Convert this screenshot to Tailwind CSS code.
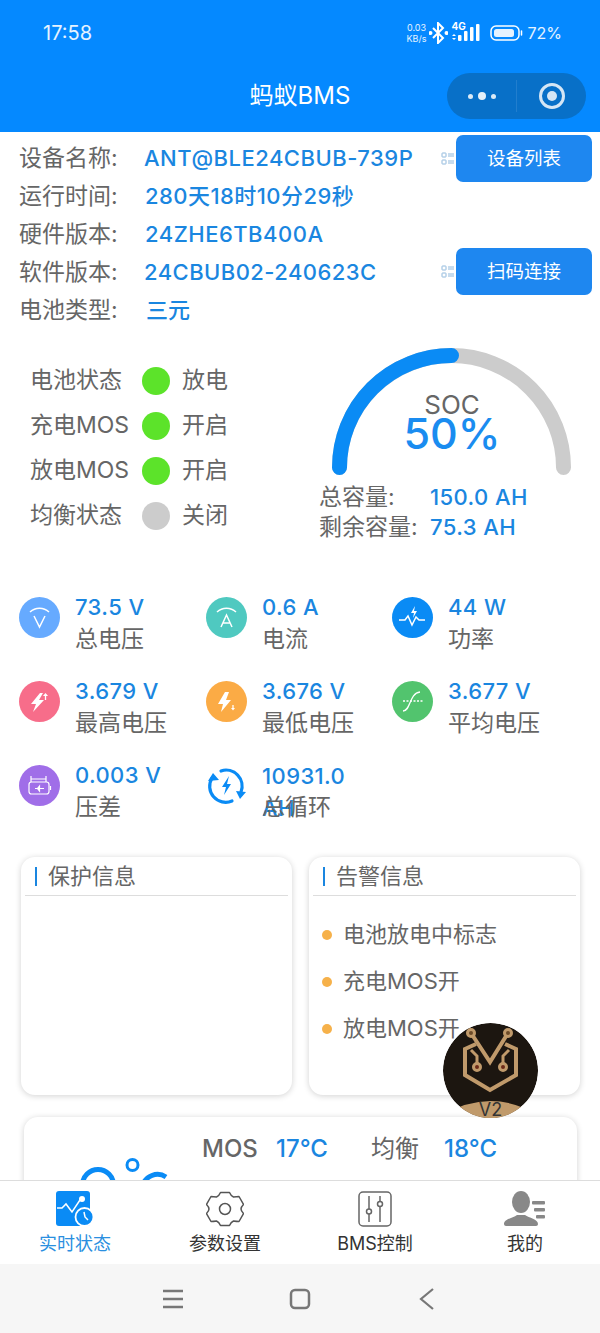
<!DOCTYPE html>
<html lang="zh">
<head>
  <meta charset="UTF-8">
  <meta name="viewport" content="width=device-width, initial-scale=1.0">
  <title>蚂蚁BMS</title>
  <script src="https://cdn.jsdelivr.net/npm/@tailwindcss/browser@4"></script>
</head>
<body class="font-['Inter','Noto_Sans_CJK_SC',sans-serif] bg-white">
<div class="relative w-[600px] h-[1333px] overflow-hidden flex flex-col">

  <!-- Header -->
  <header class="h-[132px] shrink-0 bg-[#0589ff] text-white">
    <div class="h-[66px] flex items-center pl-[43px] pr-[38px] justify-between">
      <span class="text-[20px] text-white/90">17:58</span>
      <div class="flex items-center">
        <div class="text-[9px] leading-[11px] text-center text-white/90 w-[24px]">0.03<br>KB/s</div>
        <svg class="ml-[1px]" width="19" height="22" viewBox="0 0 19 22" fill="none" stroke="white" stroke-width="2"><path d="M4 6l10 10-5 5V1l5 5L4 16"/><circle cx="1.500" cy="11" r="1" fill="white"/><circle cx="17.500" cy="11" r="1" fill="white"/></svg>
        <div class="ml-[3px] relative w-[32px] h-[22px]">
          <span class="absolute left-0 -top-[3px] text-[10px] font-bold">4G</span>
          <svg class="absolute left-0 top-0" width="32" height="22" viewBox="0 0 32 22" fill="white"><path d="M1 14l2-2 2 2zM1 16h4l-2 2z"/><rect x="7" y="13" width="3.500" height="6" rx="1"/><rect x="13" y="9" width="3.500" height="10" rx="1"/><rect x="19" y="5" width="3.500" height="14" rx="1"/><rect x="25" y="2" width="3.500" height="17" rx="1"/></svg>
        </div>
        <svg class="ml-[7px]" width="34" height="18" viewBox="0 0 34 18" fill="none"><rect x="1" y="2" width="28" height="14" rx="5" stroke="white" stroke-width="1.500"/><rect x="4" y="5" width="20" height="8" rx="2.500" fill="white" fill-opacity=".9"/><path d="M31.500 7v4" stroke="white" stroke-width="1.500" stroke-linecap="round"/></svg>
        <span class="ml-[3px] text-[16px] text-white/90">72%</span>
      </div>
    </div>
    <div class="relative h-[66px] flex items-center justify-center pb-[6px]">
      <span class="text-[24px]">蚂蚁BMS</span>
      <div class="absolute left-[447px] top-[7px] w-[139px] h-[46px] rounded-full bg-[#0870c8] flex items-center">
        <div class="w-[69px] flex items-center justify-center gap-[5px]">
          <i class="w-[5px] h-[5px] rounded-full bg-white/85"></i><i class="w-[8px] h-[8px] rounded-full bg-white/90"></i><i class="w-[5px] h-[5px] rounded-full bg-white/85"></i>
        </div>
        <div class="w-px h-[32px] bg-white/10"></div>
        <div class="flex-1 flex items-center justify-center">
          <div class="w-[26px] h-[26px] rounded-full border-[3px] border-[#d5e6f5] flex items-center justify-center"><i class="w-[10px] h-[10px] rounded-full bg-[#d5e6f5]"></i></div>
        </div>
      </div>
    </div>
  </header>

  <main class="relative flex-1 overflow-hidden">
    <!-- Device info -->
    <section class="flex justify-between pl-[19px] pr-[8px]">
      <div class="pt-[7px] text-[22px] text-[#666]">
        <div class="h-[38px] flex items-center"><span class="w-[125px] text-[23px]">设备名称:</span><span class="text-[#1a86e0] font-medium tracking-[0.5px]">ANT@BLE24CBUB-739P</span></div>
        <div class="h-[38px] flex items-center"><span class="w-[126px] text-[23px]">运行时间:</span><span class="text-[#1a86e0] font-medium tracking-[0.45px]">280天18时10分29秒</span></div>
        <div class="h-[38px] flex items-center"><span class="w-[126px] text-[23px]">硬件版本:</span><span class="text-[#1a86e0] font-medium tracking-[0.5px]">24ZHE6TB400A</span></div>
        <div class="h-[38px] flex items-center"><span class="w-[125px] text-[23px]">软件版本:</span><span class="text-[#1a86e0] font-medium tracking-[0.45px]">24CBUB02-240623C</span></div>
        <div class="h-[38px] flex items-center"><span class="w-[127px] text-[23px]">电池类型:</span><span class="text-[#1a86e0] font-medium">三元</span></div>
      </div>
      <div class="pt-[3px] flex flex-col gap-[66px]">
        <div class="flex items-center gap-[2px]">
          <svg width="13" height="13" viewBox="0 0 13 13" fill="none" stroke="#8fb8dc"><rect x="1" y="1" width="4" height="4" rx=".5"/><rect x="1" y="8" width="4" height="4" rx=".5"/><path d="M7 2h6M7 4h6M7 9h6M7 11h6"/></svg>
          <button class="w-[136px] h-[47px] rounded-[7px] bg-[#1e87f0] text-white text-[18.500px]">设备列表</button>
        </div>
        <div class="flex items-center gap-[2px]">
          <svg width="13" height="13" viewBox="0 0 13 13" fill="none" stroke="#8fb8dc"><rect x="1" y="1" width="4" height="4" rx=".5"/><rect x="1" y="8" width="4" height="4" rx=".5"/><path d="M7 2h6M7 4h6M7 9h6M7 11h6"/></svg>
          <button class="w-[136px] h-[47px] rounded-[7px] bg-[#1e87f0] text-white text-[18.500px]">扫码连接</button>
        </div>
      </div>
    </section>

    <!-- Status + SOC -->
    <section class="flex mt-[18px]">
      <div class="pl-[30px] w-[319px] pt-[11px] text-[23px] text-[#666]">
        <div class="h-[45px] flex items-center"><span class="w-[112px]">电池状态</span><i class="w-[28px] h-[28px] rounded-full bg-[#5ce32a]"></i><span class="ml-[12px]">放电</span></div>
        <div class="h-[45px] flex items-center"><span class="w-[112px]">充电MOS</span><i class="w-[28px] h-[28px] rounded-full bg-[#5ce32a]"></i><span class="ml-[12px]">开启</span></div>
        <div class="h-[45px] flex items-center"><span class="w-[112px]">放电MOS</span><i class="w-[28px] h-[28px] rounded-full bg-[#5ce32a]"></i><span class="ml-[12px]">开启</span></div>
        <div class="h-[45px] flex items-center"><span class="w-[112px]">均衡状态</span><i class="w-[28px] h-[28px] rounded-full bg-[#cccccc]"></i><span class="ml-[12px]">关闭</span></div>
      </div>
      <div class="w-[281px]">
        <div class="relative w-[281px] h-[135px]">
          <svg class="absolute left-[1px] top-0" width="280" height="130" viewBox="320 349 280 130" fill="none" stroke-width="15" stroke-linecap="round">
            <path d="M339.500 469.500A112 112 0 0 1 563.500 469.500" stroke="#cccccc"/>
            <path d="M339.500 469.500A112 112 0 0 1 451.500 357.500" stroke="#0a8bf5"/>
          </svg>
          <div class="absolute left-[13px] top-[43px] w-[240px] text-center text-[26px] leading-[30px] text-[#666]">SOC</div>
          <div class="absolute left-[13px] top-[56px] w-[240px] text-center text-[43px] font-medium leading-[60px] text-[#1a8cf0]">50%</div>
        </div>
        <div class="text-[23px] text-[#666]">
          <div class="h-[30px] flex items-center"><span class="w-[111px]">总容量:</span><span class="text-[22px] font-medium tracking-[0.4px] text-[#1a86e0]">150.0 AH</span></div>
          <div class="h-[30px] flex items-center"><span class="w-[111px]">剩余容量:</span><span class="text-[22px] font-medium tracking-[0.4px] text-[#1a86e0]">75.3 AH</span></div>
        </div>
      </div>
    </section>

    <!-- Metrics -->
    <section class="mt-[55px] pl-[19px] grid grid-cols-[187px_186px_1fr] gap-y-[20px] text-[22px] tracking-[0.4px]">
      <div class="flex h-[64px]">
        <svg class="shrink-0" width="41" height="41" viewBox="0 0 41 41" fill="none" stroke="white" stroke-width="1.500"><circle cx="20.500" cy="20.500" r="20.500" fill="#66aaff" stroke="none"/><path d="M11 15a14 14 0 0 1 19 0"/><path d="M15 19l5.500 11 5.500-11"/></svg>
        <div class="ml-[15px]"><div class="h-[21px] leading-[21px] font-medium text-[#1a86e0]">73.5 V</div><div class="mt-[11px] h-[21px] leading-[21px] text-[23px] tracking-normal text-[#666]">总电压</div></div>
      </div>
      <div class="flex h-[64px]">
        <svg class="shrink-0" width="41" height="41" viewBox="0 0 41 41" fill="none" stroke="white" stroke-width="1.500"><circle cx="20.500" cy="20.500" r="20.500" fill="#4fc9c0" stroke="none"/><path d="M11 15a14 14 0 0 1 19 0"/><path d="M15 30l5.500-12 5.500 12M17 26h7"/></svg>
        <div class="ml-[15px]"><div class="h-[21px] leading-[21px] font-medium text-[#1a86e0]">0.6 A</div><div class="mt-[11px] h-[21px] leading-[21px] text-[23px] tracking-normal text-[#666]">电流</div></div>
      </div>
      <div class="flex h-[64px]">
        <svg class="shrink-0" width="41" height="41" viewBox="0 0 41 41" fill="none" stroke="white" stroke-width="1.500"><circle cx="20.500" cy="20.500" r="20.500" fill="#0a8bf5" stroke="none"/><path d="M7 23h6l3-4 4 9 4-8 3 3h6"/><path d="M23 9l-4 7h3l-1 5 4-7h-3z" fill="white" stroke="none"/></svg>
        <div class="ml-[15px]"><div class="h-[21px] leading-[21px] font-medium text-[#1a86e0]">44 W</div><div class="mt-[11px] h-[21px] leading-[21px] text-[23px] tracking-normal text-[#666]">功率</div></div>
      </div>

      <div class="flex h-[64px]">
        <svg class="shrink-0" width="41" height="41" viewBox="0 0 41 41" fill="none"><circle cx="20.500" cy="20.500" r="20.500" fill="#f76d8a"/><path d="M21 12l-9 11h5l-3 8 11-12h-5l4-7z" fill="white"/><path d="M26.500 19v-6" stroke="white" stroke-width="1.300"/><path d="M24 15l2.500-3 2.500 3z" fill="white"/></svg>
        <div class="ml-[15px]"><div class="h-[21px] leading-[21px] font-medium text-[#1a86e0]">3.679 V</div><div class="mt-[11px] h-[21px] leading-[21px] text-[23px] tracking-normal text-[#666]">最高电压</div></div>
      </div>
      <div class="flex h-[64px]">
        <svg class="shrink-0" width="41" height="41" viewBox="0 0 41 41" fill="none"><circle cx="20.500" cy="20.500" r="20.500" fill="#fbab45"/><path d="M19 11l-7 12h5l-2 8 10-12h-5l3-8z" fill="white"/><path d="M27 24v4" stroke="white" stroke-width="1.300"/><path d="M25 27l2 2.500 2-2.500z" fill="white"/></svg>
        <div class="ml-[15px]"><div class="h-[21px] leading-[21px] font-medium text-[#1a86e0]">3.676 V</div><div class="mt-[11px] h-[21px] leading-[21px] text-[23px] tracking-normal text-[#666]">最低电压</div></div>
      </div>
      <div class="flex h-[64px]">
        <svg class="shrink-0" width="41" height="41" viewBox="0 0 41 41" fill="none" stroke="white" stroke-width="1.300"><circle cx="20.500" cy="20.500" r="20.500" fill="#52c46e" stroke="none"/><path d="M11 30c8 0 6-18 17-19"/><path d="M11 20h20" stroke-dasharray="2 1.500"/></svg>
        <div class="ml-[15px]"><div class="h-[21px] leading-[21px] font-medium text-[#1a86e0]">3.677 V</div><div class="mt-[11px] h-[21px] leading-[21px] text-[23px] tracking-normal text-[#666]">平均电压</div></div>
      </div>

      <div class="flex h-[64px]">
        <svg class="shrink-0" width="41" height="41" viewBox="0 0 41 41" fill="none" stroke="white" stroke-width="1.200"><circle cx="20.500" cy="20.500" r="20.500" fill="#a06ee8" stroke="none"/><rect x="10" y="17" width="20" height="12" rx="2.500"/><path d="M12 17v-6M27 17v-6M12 14h15M31.500 21v4"/><path d="M16 23.500h9M20.500 21l-2 2.500 2 2.500z" fill="white"/></svg>
        <div class="ml-[15px]"><div class="h-[21px] leading-[21px] font-medium text-[#1a86e0]">0.003 V</div><div class="mt-[11px] h-[21px] leading-[21px] text-[23px] tracking-normal text-[#666]">压差</div></div>
      </div>
      <div class="flex h-[64px]">
        <svg class="shrink-0" width="41" height="41" viewBox="0 0 41 41" fill="none" stroke="#0a8bf5" stroke-width="3.200" stroke-linecap="round"><path d="M15 6A16 16 0 0 1 35 27"/><path d="M26 36A16 16 0 0 1 6 13"/><path d="M30 26l10 1-6 7zM7 8l6 7-11 1z" fill="#0a8bf5" stroke="none"/><path d="M23 11l-7 11h4l-2 8 7-11h-4z" fill="#0a8bf5" stroke="none"/></svg>
        <div class="ml-[15px]"><div class="-mt-[5.500px] h-[32px] w-[90px] leading-[32px] font-medium text-[#1a86e0]">10931.0 AH</div><div class="mt-[5.500px] h-[21px] leading-[21px] text-[23px] tracking-normal text-[#666]">总循环</div></div>
      </div>
    </section>

    <!-- Protection / alarm cards -->
    <section class="mt-[28px] flex pl-[21px] gap-[17px]">
      <div class="w-[271px] h-[238px] rounded-[14px] bg-white shadow-[0_1px_6px_rgba(0,0,0,0.18)] px-[4px]">
        <div class="h-[39px] border-b border-[#ddd] flex items-center pl-[10px] text-[22px] text-[#666]"><i class="w-[2px] h-[19px] bg-[#1a86e0] mr-[11px]"></i>保护信息</div>
      </div>
      <div class="w-[271px] h-[238px] rounded-[14px] bg-white shadow-[0_1px_6px_rgba(0,0,0,0.18)] px-[4px]">
        <div class="h-[39px] border-b border-[#ddd] flex items-center pl-[10px] text-[22px] text-[#666]"><i class="w-[2px] h-[19px] bg-[#1a86e0] mr-[11px]"></i>告警信息</div>
        <ul class="pt-[15px] pl-[9px] text-[22px] text-[#666]">
          <li class="h-[47px] flex items-center"><i class="w-[10px] h-[10px] rounded-full bg-[#f6b14a] mr-[11px]"></i>电池放电中标志</li>
          <li class="h-[47px] flex items-center"><i class="w-[10px] h-[10px] rounded-full bg-[#f6b14a] mr-[11px]"></i>充电MOS开</li>
          <li class="h-[47px] flex items-center"><i class="w-[10px] h-[10px] rounded-full bg-[#f6b14a] mr-[11px]"></i>放电MOS开</li>
        </ul>
      </div>
    </section>

    <!-- Temperature card, cut by the tab bar -->
    <section class="mt-[22px] ml-[24px] w-[553px] h-[200px] rounded-[14px] bg-white shadow-[0_1px_6px_rgba(0,0,0,0.18)] relative">
      <div class="flex items-center h-[64px] pl-[178px] text-[24px] text-[#666]">
        <span class="w-[74px] font-medium">MOS</span><span class="w-[95px] font-medium text-[#1a86e0]">17°C</span><span class="w-[73px]">均衡</span><span class="font-medium text-[#1a86e0]">18°C</span>
      </div>
      <svg class="absolute left-[50px] top-[36px]" width="100" height="50" viewBox="0 0 100 50" fill="none" stroke="#0a8bf5"><circle cx="24" cy="32" r="15.500" stroke-width="5"/><circle cx="58.500" cy="12" r="5.500" stroke-width="3"/><path d="M92 24A15.500 15.500 0 0 0 68.500 33" stroke-width="5"/></svg>
    </section>
  </main>

  <!-- Floating logo -->
  <div class="absolute left-[443px] top-[1023px] w-[95px] h-[95px] rounded-full overflow-hidden">
    <svg class="absolute left-0 top-0" width="95" height="95" viewBox="0 0 95 95" fill="none">
      <circle cx="47.500" cy="47.500" r="47.500" fill="#1c1610"/>
      <path d="M0 92Q47.500 64 95 92V95H0z" fill="#c09a6b"/>
      <g stroke="#c09a6b" stroke-width="4">
        <path d="M28 10l19 29 18-29"/>
        <path d="M33 21l-11 5v26l25 15 26-15V26l-11-5"/>
        <path d="M34 43V33l-6-6M60 43V33l6-6" stroke-width="3"/>
        <circle cx="28" cy="10" r="3.500" fill="#6b4a28" stroke-width="3"/><circle cx="65" cy="10" r="3.500" fill="#6b4a28" stroke-width="3"/>
        <circle cx="34" cy="44" r="3.500" fill="#6b2a18" stroke-width="3"/><circle cx="60" cy="44" r="3.500" fill="#6b2a18" stroke-width="3"/>
      </g>
    </svg>
    <span class="absolute left-0 right-0 top-[77px] text-center text-[18px] leading-[20px] text-[#333]">V2</span>
  </div>

  <!-- Tab bar -->
  <nav class="h-[84px] shrink-0 bg-white border-t border-[#ddd] grid grid-cols-4 text-[18px] leading-[24px] text-[#333] relative">
    <div class="flex flex-col items-center pt-[10px]">
      <svg width="38" height="36" viewBox="0 0 38 36" fill="none"><rect x="0" y="0" width="34" height="35" rx="3" fill="#0a8bf5"/><path d="M1 17h5l4-4 6 8 8-12" stroke="white" stroke-width="1.500"/><circle cx="26" cy="8" r="3" fill="white"/><circle cx="28.500" cy="26" r="9" fill="#0a8bf5" stroke="white" stroke-width="1.800"/><path d="M28 21l1 5 3 3" stroke="white" stroke-width="1.500"/></svg>
      <span class="mt-[5px] text-[#2a8fe0]">实时状态</span>
    </div>
    <div class="flex flex-col items-center pt-[10px]">
      <svg width="38" height="36" viewBox="0 0 38 36" fill="none" stroke="#555" stroke-width="1.500"><path d="M14.500 1.500h9q1.500 3.500 4 4.500 3-.5 5.500-.5l4.500 8q-2.500 2.500-2.500 4.500t2.500 4.500l-4.500 8q-2.500 0-5.500-.5-2.500 1-4 4.500h-9q-1.500-3.500-4-4.500-3 .5-5.500.5l-4.500-8q2.500-2.500 2.500-4.500t-2.500-4.500l4.500-8q2.500 0 5.500.5 2.500-1 4-4.500z" stroke-linejoin="round"/><circle cx="19" cy="18" r="5.500"/></svg>
      <span class="mt-[5px]">参数设置</span>
    </div>
    <div class="flex flex-col items-center pt-[10px]">
      <svg width="34" height="36" viewBox="0 0 34 36" fill="none" stroke="#666" stroke-width="1.500"><rect x="1" y="1" width="32" height="34" rx="4"/><path d="M11 5v13M11 23v8M22 5v5M22 16v15"/><circle cx="11" cy="20.500" r="2.500"/><circle cx="22" cy="13" r="2.500"/></svg>
      <span class="mt-[5px]">BMS控制</span>
    </div>
    <div class="flex flex-col items-center pt-[10px]">
      <svg width="44" height="36" viewBox="0 0 44 36" fill="#888"><ellipse cx="18" cy="11" rx="9" ry="11"/><path d="M1 33c0-5 9-6 13-9h8c4 3 13 4 13 9 0 2-2 2-3 2H4c-1 0-3 0-3-2z"/><rect x="29" y="10" width="13" height="3.500" rx="1"/><rect x="31" y="17" width="11" height="3.500" rx="1"/><rect x="33" y="24" width="9" height="3.500" rx="1"/></svg>
      <span class="mt-[5px]">我的</span>
    </div>
  </nav>

  <!-- System nav -->
  <div class="h-[69px] shrink-0 bg-[#f6f6f6] flex items-center justify-center">
    <div class="w-[127px] flex justify-center">
      <svg width="22" height="20" viewBox="0 0 22 20" fill="none" stroke="#777" stroke-width="2.500"><path d="M1 2h20M1 10h20M1 18h20"/></svg>
    </div>
    <div class="w-[127px] flex justify-center">
      <svg width="22" height="22" viewBox="0 0 22 22" fill="none" stroke="#777" stroke-width="2.500"><rect x="2" y="2" width="18" height="18" rx="4"/></svg>
    </div>
    <div class="w-[127px] flex justify-center">
      <svg width="16" height="24" viewBox="0 0 16 24" fill="none" stroke="#777" stroke-width="2.200"><path d="M14 2L2 12l12 10"/></svg>
    </div>
  </div>
</div>
</body>
</html>
